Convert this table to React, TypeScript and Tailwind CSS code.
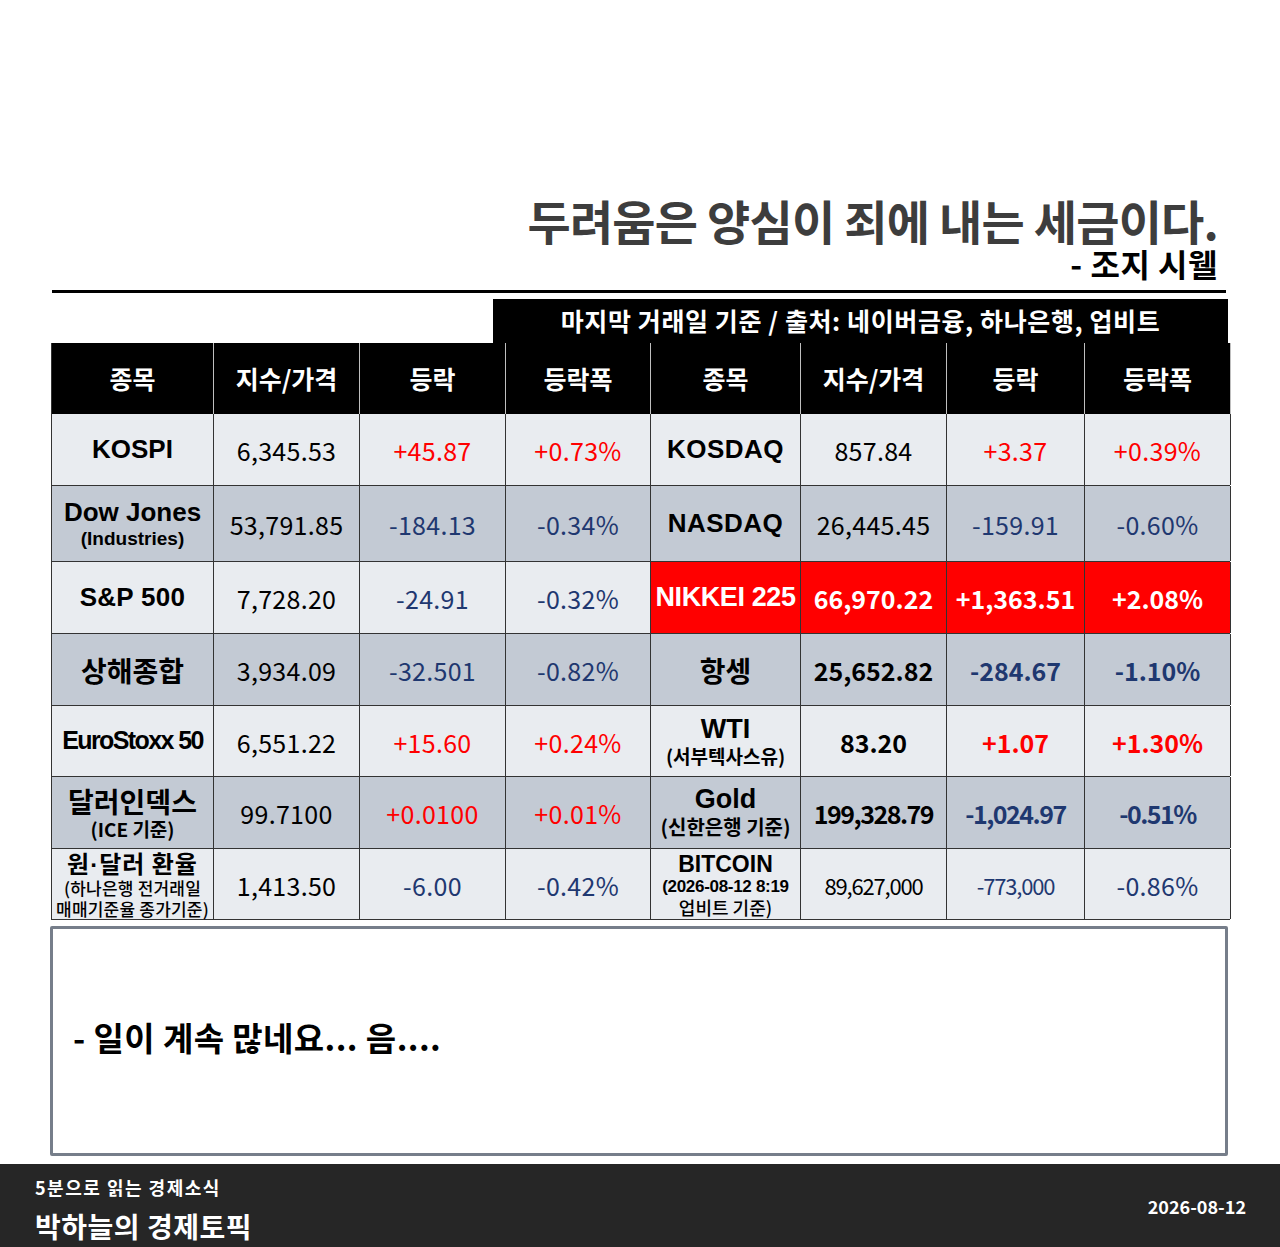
import React from 'react';

const KR = "font-['Noto_Sans_CJK_KR','Noto_Sans',sans-serif]";
const EN = "font-['Liberation_Sans','Noto_Sans_CJK_KR',sans-serif]";

type Cell = {
  name: React.ReactNode;
  price: string;
  diff: string;
  pct: string;
  up: boolean;
  strong?: boolean;
  tight?: boolean;
  small?: boolean;
};

type Row = { h: string; dark: boolean; left: Cell; right: Cell; hot?: boolean };

const rows: Row[] = [
  {
    h: 'h-[72px]',
    dark: false,
    left: { name: <span className={`${EN} text-[26px] font-bold`}>KOSPI</span>, price: '6,345.53', diff: '+45.87', pct: '+0.73%', up: true },
    right: { name: <span className={`${EN} text-[26px] font-bold tracking-[0.5px]`}>KOSDAQ</span>, price: '857.84', diff: '+3.37', pct: '+0.39%', up: true },
  },
  {
    h: 'h-[76px]',
    dark: true,
    left: {
      name: (
        <div className={`${EN} flex flex-col items-center font-bold`}>
          <span className="text-[26px] leading-[30px]">Dow Jones</span>
          <span className="text-[19px] leading-[23px]">(Industries)</span>
        </div>
      ),
      price: '53,791.85',
      diff: '-184.13',
      pct: '-0.34%',
      up: false,
    },
    right: { name: <span className={`${EN} text-[26px] font-bold tracking-[0.5px]`}>NASDAQ</span>, price: '26,445.45', diff: '-159.91', pct: '-0.60%', up: false },
  },
  {
    h: 'h-[72px]',
    dark: false,
    hot: true,
    left: { name: <span className={`${EN} text-[26px] font-bold tracking-[0.3px]`}>S&amp;P 500</span>, price: '7,728.20', diff: '-24.91', pct: '-0.32%', up: false },
    right: { name: <span className={`${EN} text-[27px] font-bold tracking-[-0.4px]`}>NIKKEI 225</span>, price: '66,970.22', diff: '+1,363.51', pct: '+2.08%', up: true, strong: true },
  },
  {
    h: 'h-[72px]',
    dark: true,
    left: { name: <span className={`${KR} text-[28px] font-bold`}>상해종합</span>, price: '3,934.09', diff: '-32.501', pct: '-0.82%', up: false },
    right: { name: <span className={`${KR} text-[28px] font-bold`}>항셍</span>, price: '25,652.82', diff: '-284.67', pct: '-1.10%', up: false, strong: true },
  },
  {
    h: 'h-[71px]',
    dark: false,
    left: { name: <span className={`${EN} text-[25px] font-bold tracking-[-1.6px]`}>EuroStoxx 50</span>, price: '6,551.22', diff: '+15.60', pct: '+0.24%', up: true },
    right: {
      name: (
        <div className="flex flex-col items-center">
          <span className={`${EN} text-[27px] font-bold leading-[29px]`}>WTI</span>
          <span className={`${KR} text-[19px] font-bold leading-[24px]`}>(서부텍사스유)</span>
        </div>
      ),
      price: '83.20',
      diff: '+1.07',
      pct: '+1.30%',
      up: true,
      strong: true,
    },
  },
  {
    h: 'h-[72px]',
    dark: true,
    left: {
      name: (
        <div className="flex flex-col items-center">
          <span className={`${KR} text-[28px] font-bold leading-[32px]`}>달러인덱스</span>
          <span className={`${KR} text-[19px] font-bold leading-[24px]`}>(ICE 기준)</span>
        </div>
      ),
      price: '99.7100',
      diff: '+0.0100',
      pct: '+0.01%',
      up: true,
    },
    right: {
      name: (
        <div className="flex flex-col items-center">
          <span className={`${EN} text-[27px] font-bold leading-[29px]`}>Gold</span>
          <span className={`${KR} text-[20px] font-bold leading-[26px]`}>(신한은행 기준)</span>
        </div>
      ),
      price: '199,328.79',
      diff: '-1,024.97',
      pct: '-0.51%',
      up: false,
      strong: true,
      tight: true,
    },
  },
  {
    h: 'h-[71px]',
    dark: false,
    left: {
      name: (
        <div className={`${KR} flex flex-col items-center font-bold`}>
          <span className="text-[24px] leading-[25px] tracking-[1px]">
            원<span className={EN}>·</span>달러 환율
          </span>
          <span className="text-[17px] font-medium leading-[21px] tracking-[0.2px]">(하나은행 전거래일</span>
          <span className="whitespace-nowrap text-[17px] font-medium leading-[21px] tracking-[0.2px]">매매기준율 종가기준)</span>
        </div>
      ),
      price: '1,413.50',
      diff: '-6.00',
      pct: '-0.42%',
      up: false,
    },
    right: {
      name: (
        <div className="flex flex-col items-center font-bold">
          <span className={`${EN} text-[23px] leading-[26px]`}>BITCOIN</span>
          <span className={`${EN} text-[17px] leading-[20px] tracking-[-0.3px]`}>(2026-08-12 8:19</span>
          <span className={`${KR} text-[18px] font-medium leading-[21px]`}>업비트 기준)</span>
        </div>
      ),
      price: '89,627,000',
      diff: '-773,000',
      pct: '-0.86%',
      up: false,
      small: true,
    },
  },
];

const heads = ['종목', '지수/가격', '등락', '등락폭'];

function Values({ c, hot }: { c: Cell; hot?: boolean }) {
  const base = c.tight
    ? 'text-[25px] font-bold tracking-[-1.5px]'
    : c.strong
      ? 'text-[25px] font-bold'
      : 'text-[25px] tracking-[0.3px]';
  const numBase = c.small ? 'text-[22px] tracking-[-1.2px]' : base;
  const col = hot ? 'text-white' : c.up ? 'text-[#ff0000]' : 'text-[#1f3870]';
  const priceCol = hot ? 'text-white' : 'text-black';
  const cls = `flex items-center justify-center border-r border-[#333] pt-[3px] ${KR}`;
  return (
    <>
      <div className={`${cls} ${numBase} ${priceCol}`}>{c.price}</div>
      <div className={`${cls} ${numBase} ${col}`}>{c.diff}</div>
      <div className={`${cls} ${base} ${col}`}>{c.pct}</div>
    </>
  );
}

export default function App() {
  return (
    <div className="relative h-[1247px] w-[1280px] overflow-hidden bg-white text-black">
      <div className="flex flex-col items-end pr-[62px] pt-[192px]">
        <h1 className={`${KR} text-[47px] font-bold leading-[56px] tracking-[-0.8px] text-[#3d3d3d]`}>
          두려움은 양심이 죄에 내는 세금이다.
        </h1>
        <p className={`${KR} -mt-[4px] text-[32px] font-bold leading-[38px] tracking-[0.5px]`}>- 조지 시웰</p>
      </div>

      <div className="ml-[52px] mt-[8px] h-[3px] w-[1174px] bg-black" />

      <div className="ml-[493px] mt-[6px] flex h-[44px] w-[735px] items-center justify-center bg-black">
        <span className={`${KR} text-[25px] font-bold tracking-[0.6px] text-white`}>
          마지막 거래일 기준 / 출처: 네이버금융, 하나은행, 업비트
        </span>
      </div>

      <div className="ml-[51px] w-[1179px] border-l border-[#333]">
        <div className="grid h-[71px] grid-cols-[162px_146px_146px_145px_150px_146px_138px_146px] bg-black">
          {[...heads, ...heads].map((h, i) => (
            <div
              key={i}
              className={`${KR} flex items-center justify-center border-r border-[#bfbfbf] text-[25px] font-bold text-white`}
            >
              {h}
            </div>
          ))}
        </div>
        {rows.map((r, i) => (
          <div
            key={i}
            className={`grid ${r.h} grid-cols-[162px_146px_146px_145px_150px_146px_138px_146px] border-b border-[#333] ${
              r.dark ? 'bg-[#c3cad4]' : 'bg-[#e9ecf0]'
            }`}
          >
            <div className="flex items-center justify-center border-r border-[#333] text-black">
              {r.left.name}
            </div>
            <Values c={r.left} />
            <div
              className={`flex items-center justify-center border-r border-[#333] ${
                r.hot ? 'bg-[#ff0000] text-white' : 'text-black'
              }`}
            >
              {r.right.name}
            </div>
            {r.hot ? (
              <>
                <div className={`flex items-center justify-center border-r border-[#333] bg-[#ff0000] pt-[3px] ${KR} text-[25px] font-bold text-white`}>
                  {r.right.price}
                </div>
                <div className={`flex items-center justify-center border-r border-[#333] bg-[#ff0000] pt-[3px] ${KR} text-[25px] font-bold text-white`}>
                  {r.right.diff}
                </div>
                <div className={`flex items-center justify-center border-r border-[#333] bg-[#ff0000] pt-[3px] ${KR} text-[25px] font-bold text-white`}>
                  {r.right.pct}
                </div>
              </>
            ) : (
              <Values c={r.right} />
            )}
          </div>
        ))}
      </div>

      <div className="ml-[50px] mt-[6px] flex h-[230px] w-[1178px] items-center rounded-[2px] border-[3px] border-[#767e8a] pb-[6px] pl-[20px]">
        <p className={`${KR} text-[33px] font-bold tracking-[0.4px]`}>- 일이 계속 많네요... 음....</p>
      </div>

      <footer className="absolute bottom-0 left-0 flex h-[83px] w-full items-end justify-between bg-[#262626] pb-[2px] pl-[35px] pr-[34px] text-white">
        <div className={`${KR} flex flex-col font-bold`}>
          <span className="text-[18px] leading-[24px] tracking-[1.5px]">5분으로 읽는 경제소식</span>
          <span className="mt-[8px] text-[28px] leading-[38px] tracking-[0.5px]">박하늘의 경제토픽</span>
        </div>
        <span className={`${KR} mb-[25px] text-[18px] font-bold`}>2026-08-12</span>
      </footer>
    </div>
  );
}
